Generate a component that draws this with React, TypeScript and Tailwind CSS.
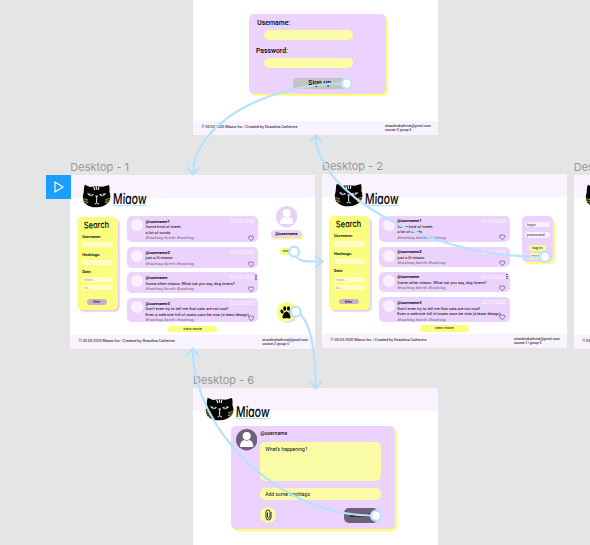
import React from "react";

const LINE = "whitespace-nowrap";

function Cat() {
  return (
    <svg className="h-[24px] w-[29px] shrink-0" viewBox="0 0 87 72">
      <path
        d="M8 2 L24 9 Q42 5 62 8 L81 3 Q84 14 82 23 Q89 40 81 54 Q66 70 44 70 Q20 70 7 56 Q-1 42 5 26 Q5 12 8 2Z"
        fill="#050505"
      />
      <path d="M35 8 L38 18 M43 7 V17 M51 8 L48 18" stroke="#fff" strokeWidth="3.2" />
      <path d="M15 28 L36 31 Q33 37 26 37 Q18 36 15 28Z M51 31 L73 28 Q70 36 62 37 Q54 37 51 31Z" fill="#d0d0d0" />
      <circle cx="27" cy="32" r="2.4" fill="#050505" />
      <circle cx="61" cy="32" r="2.4" fill="#050505" />
      <path d="M44 36 V56 M38 60 Q42 60 44 56 Q46 60 51 60 M40 36 H48" stroke="#fff" strokeWidth="2.8" fill="none" />
      <path
        d="M2 44 L17 47 M3 52 L17 51 M7 59 L19 55 M85 43 L70 47 M85 51 L70 51 M81 58 L69 55"
        stroke="#d8d455"
        strokeWidth="2.2"
      />
    </svg>
  );
}

function Brand() {
  return (
    <div className="flex h-[23px] shrink-0 bg-[#f9f2ff] pt-[9px] pl-[11.5px]">
      <Cat />
      <div className="mt-[8.5px] ml-[2px] h-[14px] w-[34px] shrink-0 border-b-[1.5px] border-[#b5dffb]">
        <span
          className={`${LINE} block origin-left -skew-x-3 scale-x-[0.71] font-['Inter'] text-[14.8px] leading-[14px] font-medium text-black [font-feature-settings:'cv11']`}
        >
          Miaow
        </span>
      </div>
    </div>
  );
}

function Footer({ mail, group }: { mail: string; group: string }) {
  return (
    <div className="flex h-[14.3px] shrink-0 items-center justify-between bg-[#f9f2ff] pr-[7px] pl-[8.5px] text-[3.75px] text-black">
      <span className={LINE}>© 03.03.2020 Miaow Inc. | Created by Strazdina Catherine</span>
      <span className={`${LINE} w-[46px] text-[3.45px] leading-[4.2px]`}>
        {mail}
        <br />
        {group}
      </span>
    </div>
  );
}

function Person({ size, bg, fg }: { size: string; bg: string; fg: string }) {
  return (
    <svg className={`${size} shrink-0`} viewBox="0 0 64 64">
      <circle cx="32" cy="32" r="32" fill={bg} />
      <circle cx="32" cy="21" r="12" fill={fg} />
      <path d="M12 54 Q12 36 25 33 Q32 37 39 33 Q52 36 52 54Z" fill={fg} />
    </svg>
  );
}

function SearchPanel() {
  const field = "h-[5.2px] w-[30.5px] rounded-full bg-[#fcfdc8] pl-[2px] text-[3.8px] leading-[5.2px] text-[#a4a36c]";
  const label = "h-[6px] text-[3.9px] leading-[6px] font-bold text-[#222]";
  return (
    <div className="flex h-[93.5px] w-[41px] shrink-0 flex-col rounded-[5px] bg-[#fafd7d] pt-[4px] pl-[5.5px] shadow-[1.7px_1.7px_0_#e8cffa]">
      <div className="h-[13px] pl-[1.5px]">
        <span
          className={`${LINE} block origin-left translate-y-[0.6px] -rotate-2 scale-x-[0.8] font-['Inter'] text-[9.2px] leading-[8px] font-medium text-black [font-feature-settings:'cv11']`}
        >
          Search
        </span>
      </div>
      <div className={label}>Username:</div>
      <div className={`${field} mt-[2.2px]`} />
      <div className={`${label} mt-[4.2px]`}>Hashtags:</div>
      <div className={`${field} mt-[2px]`} />
      <div className={`${label} mt-[4.1px]`}>Date:</div>
      <div className={`${field} mt-[2.4px]`}>from...</div>
      <div className={`${field} mt-[2.8px]`}>to...</div>
      <div className="mt-[9px] ml-[4.5px] h-[5.4px] w-[20px] rounded-full bg-[#c9b0cb] text-center text-[3.8px] leading-[5.4px] text-black">
        filter
      </div>
    </div>
  );
}

type Post = { user: string; lines: string[]; box: string; menu?: boolean; date: string };

function Card({ post }: { post: Post }) {
  return (
    <div className={`${post.box} flex w-[131px] shrink-0 rounded-[5px] bg-[#ecd3fe] pl-[4px]`}>
      <div className="mt-[3px] size-[12px] shrink-0 rounded-full bg-[#f9effe]" />
      <div className={`${LINE} mt-[2.8px] ml-[2.5px] w-[84px] text-[4.08px] leading-[5.5px] text-black`}>
        <div className="font-bold">{post.user}</div>
        {post.lines.map((l) => (
          <div key={l}>{l}</div>
        ))}
        <div className="text-[#75657e]">#hashtag #smth #hashtag</div>
      </div>
      <div className="flex flex-1 flex-col items-end justify-between pt-[3px] pr-[4px] pb-[0.8px]">
        <div className="flex items-start">
          <span className={`${LINE} text-[4.5px] leading-[5.5px] text-[#fbf6ff]`}>{post.date}</span>
          {post.menu && (
            <svg className="-mt-[1.5px] -mr-[2.5px] ml-[1px] h-[7px] w-[2px]" viewBox="0 0 4 14" fill="#333">
              <circle cx="2" cy="3" r="1.4" />
              <circle cx="2" cy="7" r="1.4" />
              <circle cx="2" cy="11" r="1.4" />
            </svg>
          )}
        </div>
        <svg className="size-[6.4px]" viewBox="0 0 20 20" fill="none" stroke="#4b3f52" strokeWidth="2">
          <path d="M10 18 L3 11 Q0 7 3 4 Q7 1 10 5 Q13 1 17 4 Q20 7 17 11Z" />
        </svg>
      </div>
    </div>
  );
}

const makePosts = (meow: string, even: string): Post[] => [
  { user: "@username1", lines: ["Some kind of tweet.", "a lot of words"], box: "h-[26px]", date: "02/02/2020" },
  { user: "@username2", lines: [meow], box: "mt-[5px] h-[20.5px]", date: "02/02/2020" },
  {
    user: "@username",
    lines: ["Some other miaow. What cat you say, dog lovers?"],
    box: "mt-[4.7px] h-[20.6px]",
    menu: true,
    date: "02/02/2020",
  },
  {
    user: "@username3",
    lines: ["Don’t even try to tell me that cats are not cool!", even],
    box: "mt-[5px] h-[24.3px]",
    date: "02/02/2020",
  },
];

function Paw() {
  return (
    <div className="flex size-[19.4px] items-center justify-center rounded-full bg-[#fafd7d] shadow-[1px_1px_0_#e8cffa]">
      <svg className="size-[13px]" viewBox="0 0 26 26" fill="#080808">
        <ellipse cx="4" cy="11" rx="3" ry="4.2" transform="rotate(-20 4 11)" />
        <ellipse cx="9.5" cy="5" rx="3" ry="4.6" />
        <ellipse cx="17" cy="5" rx="3" ry="4.6" />
        <ellipse cx="22.2" cy="11" rx="3" ry="4.2" transform="rotate(20 22.2 11)" />
        <path d="M13 11 Q17 11 20 18 Q23 25 18 25 L13 24 L8 25 Q3 25 6 18 Q9 11 13 11Z" />
      </svg>
    </div>
  );
}

function ProfileRail() {
  return (
    <div className="mt-[-10px] ml-[0.5px] flex w-[32px] shrink-0 flex-col items-center">
      <Person size="size-[21.4px]" bg="#e8d0fa" fg="#ffffff" />
      <div className="mt-[2.8px] h-[7.4px] w-[31px] rounded-full bg-[#ecd3fe] text-center text-[4.2px] leading-[7.4px] font-bold text-black shadow-[1.2px_1.4px_0_#fafd7d]">
        @username
      </div>
      <div className="mt-[10.5px] h-[6.6px] w-[14px] rounded-full bg-[#fafd7d] pl-[3.5px] text-[4px] leading-[6.6px] text-black">
        exit
      </div>
      <div className="mt-[47.5px]">
        <Paw />
      </div>
    </div>
  );
}

function LoginRail() {
  const input = "h-[5.7px] w-[25px] rounded-full bg-[#f9effe] pl-[2px] text-[4.1px] leading-[5.7px] text-[#333]";
  const button = "h-[6px] w-[17px] rounded-full bg-[#fafd9d] text-center leading-[6px] text-black";
  return (
    <div className="ml-[0.3px] flex h-[46px] w-[30.5px] shrink-0 flex-col items-center rounded-[5px] bg-[#ecd3fe] pt-[6.3px] shadow-[2px_2px_0_#fafd7d]">
      <div className={input}>login</div>
      <div className={`${input} mt-[4.7px]`}>password</div>
      <div className={`${button} mt-[6.8px] text-[4.3px]`}>log in</div>
      <div className={`${button} mt-[2.6px] text-[3.6px]`}>register</div>
    </div>
  );
}

function FeedFrame({
  posts,
  rail,
  mail,
  group,
}: {
  posts: Post[];
  rail: React.ReactNode;
  mail: string;
  group: string;
}) {
  return (
    <div className="flex h-[174.2px] w-[245px] flex-col bg-white">
      <Brand />
      <div className="flex flex-1 pt-[19.3px] pl-[6.5px]">
        <SearchPanel />
        <div className="-mt-[0.8px] ml-[9.3px] flex flex-col items-center">
          {posts.map((p) => (
            <Card key={p.user} post={p} />
          ))}
          <div className="mt-[3.5px] h-[6.6px] w-[49px] rounded-full bg-[#fafd7d] text-center text-[4.1px] leading-[6.6px] text-black">
            view more
          </div>
        </div>
        <div className="-mt-[0.8px] ml-[12px]">{rail}</div>
      </div>
      <Footer mail={mail} group={group} />
    </div>
  );
}

function SignUpFrame() {
  const input = "h-[10.6px] w-[89px] rounded-full bg-[#fafda5]";
  const label = "text-[6.8px] leading-[8px] font-medium text-black";
  return (
    <div className="flex h-[135px] w-[245px] flex-col bg-white">
      <div className="flex-1 pt-[14px] pl-[56.3px]">
        <div className="h-[80px] w-[136.7px] rounded-[5px] bg-[#ecd3fe] pt-[5px] shadow-[2px_2px_0_#fafd7d]">
          <div className={`${label} pl-[8px]`}>Username:</div>
          <div className={`${input} mt-[2.5px] ml-[14.5px]`} />
          <div className={`${label} mt-[7px] pl-[6.7px]`}>Password:</div>
          <div className={`${input} mt-[2.5px] ml-[14.5px]`} />
          <div className="mt-[9.7px] ml-[43.5px] h-[11.5px] w-[56px] rounded-[4px] bg-[#c4c4c4] pl-[15.5px] text-[6.8px] leading-[11.5px] font-medium text-black">
            Sign up
          </div>
        </div>
      </div>
      <Footer mail="strazdinakathrine@gmail.com" group="course 2| group 5" />
    </div>
  );
}

function ComposeFrame() {
  return (
    <div className="flex h-[174px] w-[245px] flex-col bg-white">
      <Brand />
      <div className="pt-[15.3px] pl-[38px]">
        <div className="flex h-[102.7px] w-[164.3px] rounded-[5px] bg-[#ecd3fe] pl-[4.6px] shadow-[2px_2.4px_0_#fafd7d]">
          <div className="mt-[3.3px]">
            <Person size="size-[21.4px]" bg="#6f607a" fg="#ffffff" />
          </div>
          <div className="ml-[3.2px] w-[121px] pt-[3.7px] text-[5.05px] text-[#111]">
            <div className="leading-[6px] font-medium">@username</div>
            <div className="mt-[6.3px] h-[39px] rounded-[5px] bg-[#f9fca4] pt-[4px] pl-[5px] leading-[6px]">
              What’s happening?
            </div>
            <div className="mt-[7px] h-[12px] rounded-[5px] bg-[#f9fca4] pl-[5px] leading-[12px]">
              Add some hashtags
            </div>
            <div className="mt-[6.3px] flex items-center">
              <div className="flex size-[16px] items-center justify-center rounded-full bg-[#f9fca4]">
                <svg className="h-[12px] w-[7px]" viewBox="0 0 14 24" fill="none" stroke="#333" strokeWidth="2">
                  <path d="M12 6 V17 Q12 22 7 22 Q2 22 2 17 V6 Q2 2 6 2 Q10 2 10 6 V16 Q10 18 7.5 18 Q5 18 5 16 V7" />
                </svg>
              </div>
              <div className="mt-[2px] ml-[67.5px] h-[14.6px] w-[34px] rounded-[5px] bg-[#6f607a] pl-[6px] text-[6.2px] leading-[14.6px] font-medium text-black">
                Miaow!
              </div>
            </div>
          </div>
        </div>
      </div>
    </div>
  );
}

function Label({ children }: { children: React.ReactNode }) {
  return (
    <div className={`${LINE} h-[14px] font-['Inter'] text-[11px] leading-[12.4px] text-[#989898]`}>{children}</div>
  );
}

function Wires() {
  return (
    <svg
      className="absolute top-0 left-0 h-[545px] w-[590px]"
      viewBox="0 0 590 545"
      fill="none"
      stroke="#b8e1fe"
      strokeWidth="2.2"
    >
      <path d="M342 83.5 C265 84 193 125 193 174 M186.7 167 L193 174.3 L199.5 167" />
      <path d="M540 256.7 C425 256.7 315.7 192 315.7 135.5 M309.3 142.5 L315.7 135 L322 142.5" />
      <path d="M296 256 C298 262 308 261.5 322 261.5 M315 255.5 L322.5 261.5 L315 267.5" />
      <path d="M300 313.5 C310 325 315.5 345 315.5 388 M309.3 381 L315.5 388.3 L322 381" />
      <path d="M371 515.5 C280 515.5 192.7 430 192.7 349 M186.5 356 L192.7 348.8 L199 356" />
      <g fill="#fff">
        <circle cx="346.7" cy="83.5" r="5" />
        <circle cx="545" cy="256.7" r="5" />
        <circle cx="294.2" cy="251.7" r="5" />
        <circle cx="295.7" cy="311.7" r="5" />
        <circle cx="376" cy="515.7" r="5" />
      </g>
    </svg>
  );
}

export default function App() {
  return (
    <div className="relative h-[545px] w-[590px] overflow-hidden bg-[#e5e5e5] font-['Roboto',sans-serif]">
      <div className="absolute top-0 left-[193px]">
        <SignUpFrame />
      </div>
      <div className="absolute top-[160.7px] left-[70.3px]">
        <Label>Desktop - 1</Label>
        <FeedFrame
          posts={makePosts("just a lil miaow", "Even a web-site full of ocats cacn be nice (a least design)")}
          rail={<ProfileRail />}
          mail="strazdinakathrine@gmail.com"
          group="course 2| group 5"
        />
      </div>
      <div className="absolute top-[160px] left-[322px]">
        <Label>Desktop - 2</Label>
        <FeedFrame
          posts={makePosts("just a lil miaow.", "Even a web-site full of ocats cacn be nice (a least design)")}
          rail={<LoginRail />}
          mail="strazdinakathrine@gmail.com"
          group="course 2 | group 5"
        />
      </div>
      <div className="absolute top-[160.7px] left-[573.7px]">
        <Label>Desktop - 3</Label>
        <div className="flex h-[174.2px] w-[245px] flex-col bg-white">
          <Brand />
          <div className="flex-1" />
          <Footer mail="strazdinakathrine@gmail.com" group="course 2| group 5" />
        </div>
      </div>
      <div className="absolute top-[373.7px] left-[193px]">
        <Label>Desktop - 6</Label>
        <ComposeFrame />
      </div>
      <div className="absolute top-[174.7px] left-[46px] flex h-[24px] w-[24.7px] items-center justify-center bg-[#1b9eff]">
        <svg className="ml-[1px] h-[12px] w-[10px]" viewBox="0 0 10 12" fill="none" stroke="#fff" strokeWidth="1.1">
          <path d="M1 1 L9 6 L1 11Z" />
        </svg>
      </div>
      <Wires />
    </div>
  );
}
